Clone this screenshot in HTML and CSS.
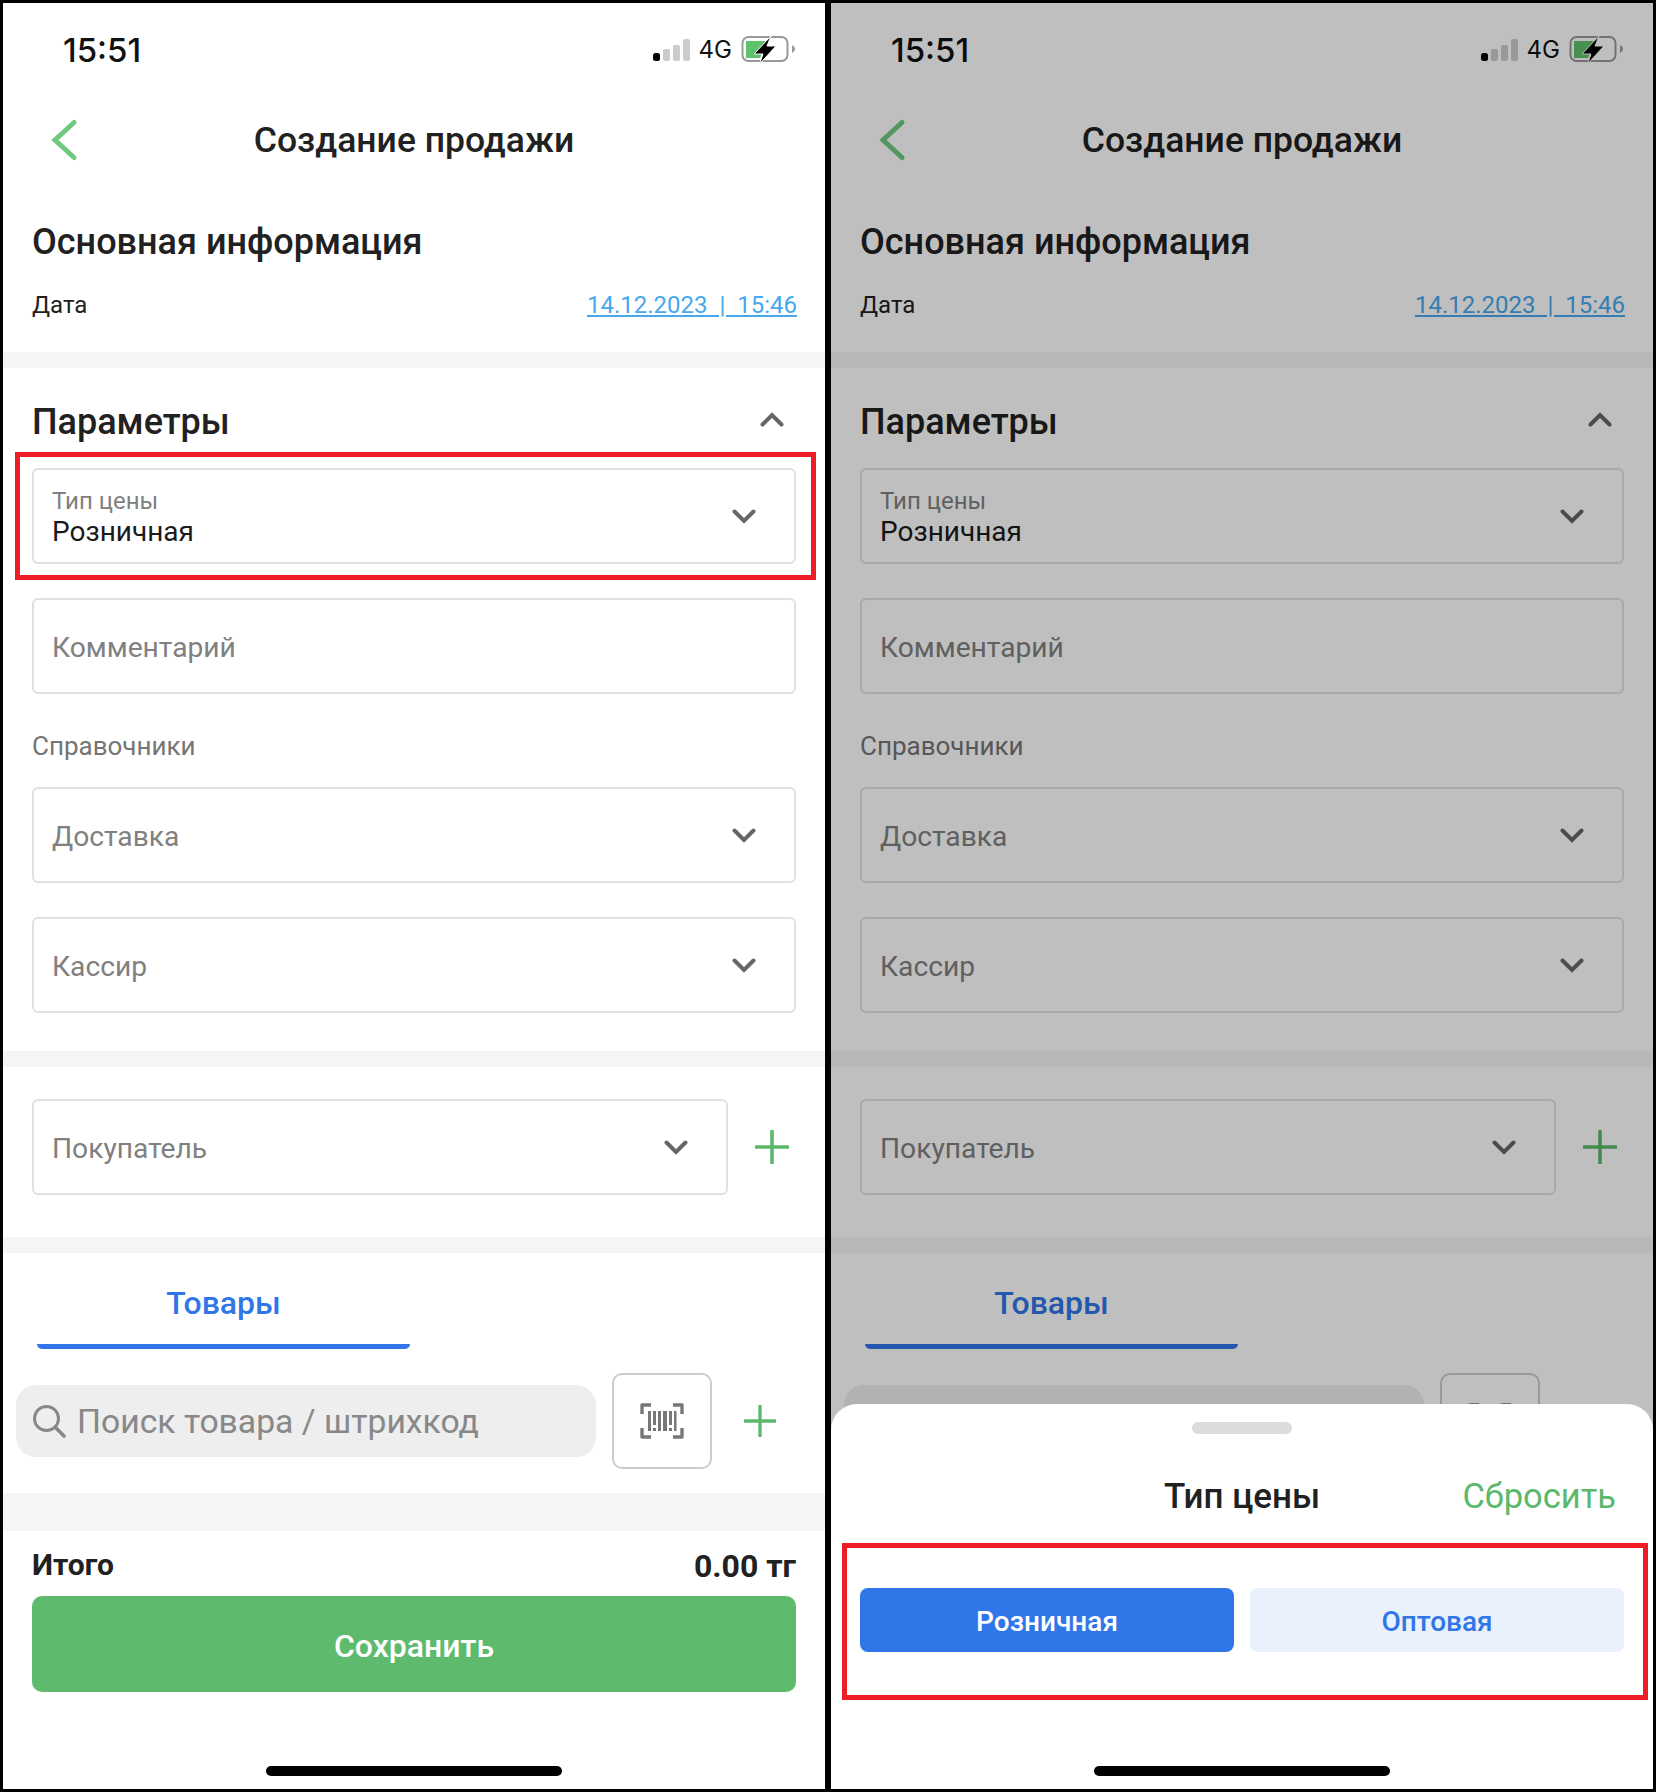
FILE: index.html
```html
<!DOCTYPE html>
<html>
<head>
	<meta charset="utf-8" />
	<title>Создание продажи</title>
	<link rel="stylesheet" href="styles.css">
</head>
<body>
<svg class="defs" width="0" height="0">
	<symbol id="i-signal" viewBox="0 0 37 22">
		<rect x="0" y="14" width="7" height="8" rx="2.5" fill="#000"/>
		<rect x="10" y="10" width="7" height="12" rx="2" fill="#ccc"/>
		<rect x="20" y="6" width="7" height="16" rx="2" fill="#ccc"/>
		<rect x="30" y="0" width="7" height="22" rx="2" fill="#ccc"/>
	</symbol>
	<symbol id="i-battery" viewBox="0 0 54 30">
		<rect x="1.5" y="3" width="45" height="24" rx="6" fill="none" stroke="#999" stroke-width="2"/>
		<path d="M5 7h22l-8 17H5z" fill="#5ec26a"/>
		<path d="M51 11c2 1 3 3 3 4s-1 3-3 4z" fill="#999"/>
		<path d="M30 2 13 20h9l-3.500 10L35 12h-9z" fill="#000" stroke="#fff" stroke-width="1"/>
	</symbol>
	<symbol id="i-back" viewBox="0 0 28 44">
		<path d="M23 4.500 4 22l19 17.500" fill="none" stroke="#6fc97f" stroke-width="5" stroke-linecap="round"/>
	</symbol>
	<symbol id="i-down" viewBox="0 0 24 15">
		<path d="M2.500 2.500 12 12 21.500 2.500" fill="none" stroke="#666" stroke-width="4" stroke-linecap="round"/>
	</symbol>
	<symbol id="i-up" viewBox="0 0 24 15">
		<path d="M2.500 12.500 12 3 21.500 12.500" fill="none" stroke="#666" stroke-width="4" stroke-linecap="round"/>
	</symbol>
	<symbol id="i-plus" viewBox="0 0 34 34">
		<path d="M17 1v32M1 17h32" fill="none" stroke="#5cb86a" stroke-width="3.600" stroke-linecap="round"/>
	</symbol>
	<symbol id="i-search" viewBox="0 0 34 34">
		<circle cx="14.500" cy="14.500" r="12" fill="none" stroke="#888" stroke-width="3"/>
		<path d="M23.500 23.500 32 32" stroke="#888" stroke-width="3.600" stroke-linecap="round"/>
	</symbol>
	<symbol id="i-barcode" viewBox="0 0 44 36">
		<g fill="none" stroke="#777" stroke-width="3.400" stroke-linejoin="round">
			<path d="M11 2H2v9M33 2h9v9M11 34H2v-9M33 34h9v-9"/>
		</g>
		<g fill="#777">
			<rect x="8" y="8" width="3" height="20"/>
			<rect x="13" y="8" width="3" height="14"/>
			<rect x="13" y="25" width="3" height="3"/>
			<rect x="18" y="8" width="3" height="20"/>
			<rect x="23" y="8" width="4" height="20"/>
			<rect x="29" y="8" width="3" height="14"/>
			<rect x="29" y="25" width="3" height="3"/>
			<rect x="34" y="8" width="2.500" height="20"/>
		</g>
	</symbol>
</svg>

<div class="frame">

	<!-- экран формы -->
	<div class="phone">
		<div class="status">
			<span class="time">15:51</span>
			<svg class="signal"><use href="#i-signal"/></svg>
			<span class="net">4G</span>
			<svg class="battery"><use href="#i-battery"/></svg>
		</div>
		<div class="header">
			<svg class="back"><use href="#i-back"/></svg>
			<div class="header-title">Создание продажи</div>
		</div>
		<div class="info">
			<div class="section-title">Основная информация</div>
			<div class="date-row">
				<span>Дата</span>
				<a class="date-link" href="#">14.12.2023&nbsp; |&nbsp; 15:46</a>
			</div>
		</div>
		<div class="band"></div>
		<div class="params">
			<div class="params-head">
				<div class="section-title">Параметры</div>
				<svg class="up"><use href="#i-up"/></svg>
			</div>
			<div class="field marked">
				<div class="field-text">
					<div class="field-label">Тип цены</div>
					<div class="field-value">Розничная</div>
				</div>
				<svg class="down"><use href="#i-down"/></svg>
			</div>
			<div class="field"><div class="placeholder">Комментарий</div></div>
			<div class="group-label">Справочники</div>
			<div class="field">
				<div class="placeholder">Доставка</div>
				<svg class="down"><use href="#i-down"/></svg>
			</div>
			<div class="field">
				<div class="placeholder">Кассир</div>
				<svg class="down"><use href="#i-down"/></svg>
			</div>
		</div>
		<div class="band"></div>
		<div class="buyer">
			<div class="field buyer-field">
				<div class="placeholder">Покупатель</div>
				<svg class="down"><use href="#i-down"/></svg>
			</div>
			<svg class="plus"><use href="#i-plus"/></svg>
		</div>
		<div class="band"></div>
		<div class="tabs"><div class="tab">Товары</div></div>
		<div class="search-row">
			<div class="search">
				<svg class="search-icon"><use href="#i-search"/></svg>
				<span>Поиск товара / штрихкод</span>
			</div>
			<div class="scan"><svg class="barcode"><use href="#i-barcode"/></svg></div>
			<svg class="plus plus-search"><use href="#i-plus"/></svg>
		</div>
		<div class="band band-wide"></div>
		<div class="total">
			<span>Итого</span>
			<span class="sum">0.00 тг</span>
		</div>
		<div class="save">Сохранить</div>
		<div class="home"></div>
	</div>

	<!-- тот же экран + шторка -->
	<div class="phone">
		<div class="status">
			<span class="time">15:51</span>
			<svg class="signal"><use href="#i-signal"/></svg>
			<span class="net">4G</span>
			<svg class="battery"><use href="#i-battery"/></svg>
		</div>
		<div class="header">
			<svg class="back"><use href="#i-back"/></svg>
			<div class="header-title">Создание продажи</div>
		</div>
		<div class="info">
			<div class="section-title">Основная информация</div>
			<div class="date-row">
				<span>Дата</span>
				<a class="date-link" href="#">14.12.2023&nbsp; |&nbsp; 15:46</a>
			</div>
		</div>
		<div class="band"></div>
		<div class="params">
			<div class="params-head">
				<div class="section-title">Параметры</div>
				<svg class="up"><use href="#i-up"/></svg>
			</div>
			<div class="field">
				<div class="field-text">
					<div class="field-label">Тип цены</div>
					<div class="field-value">Розничная</div>
				</div>
				<svg class="down"><use href="#i-down"/></svg>
			</div>
			<div class="field"><div class="placeholder">Комментарий</div></div>
			<div class="group-label">Справочники</div>
			<div class="field">
				<div class="placeholder">Доставка</div>
				<svg class="down"><use href="#i-down"/></svg>
			</div>
			<div class="field">
				<div class="placeholder">Кассир</div>
				<svg class="down"><use href="#i-down"/></svg>
			</div>
		</div>
		<div class="band"></div>
		<div class="buyer">
			<div class="field buyer-field">
				<div class="placeholder">Покупатель</div>
				<svg class="down"><use href="#i-down"/></svg>
			</div>
			<svg class="plus"><use href="#i-plus"/></svg>
		</div>
		<div class="band"></div>
		<div class="tabs"><div class="tab">Товары</div></div>
		<div class="search-row">
			<div class="search">
				<svg class="search-icon"><use href="#i-search"/></svg>
				<span>Поиск товара / штрихкод</span>
			</div>
			<div class="scan"><svg class="barcode"><use href="#i-barcode"/></svg></div>
			<svg class="plus plus-search"><use href="#i-plus"/></svg>
		</div>

		<div class="overlay"></div>
		<div class="sheet">
			<div class="handle"></div>
			<div class="sheet-head">
				<div class="sheet-title">Тип цены</div>
				<div class="sheet-reset">Сбросить</div>
			</div>
			<div class="options">
				<div class="option option-on">Розничная</div>
				<div class="option">Оптовая</div>
			</div>
			<div class="home sheet-home"></div>
		</div>
	</div>

</div>
</body>
</html>
```

FILE: styles.css
```css
body{
	margin: 0;
	background-color: #000;
	font-family: Roboto, "Liberation Sans", sans-serif;
	color: #212121;
}
.defs{
	position: absolute;
}
.frame{
	display: flex;
	gap: 6px;
	padding: 3px;
	width: 1650px;
}
.phone{
	position: relative;
	width: 822px;
	height: 1786px;
	background-color: #fff;
	overflow: hidden;
	flex: none;
}
/* status bar */
.status{
	display: flex;
	align-items: center;
	height: 92px;
	padding: 0 30px 0 60px;
}
.time{
	font-family: Inter, Roboto, sans-serif;
	font-size: 33px;
	font-weight: 500;
	color: #111;
	margin-right: auto;
	padding-top: 2px;
}
.signal{
	width: 37px;
	height: 22px;
	margin-top: 1px;
}
.net{
	font-family: Inter, Roboto, sans-serif;
	font-size: 24px;
	color: #111;
	margin: 0 9px 0 9px;
}
.battery{
	width: 54px;
	height: 30px;
}
/* header */
.header{
	display: grid;
	grid-template-columns: 1fr auto 1fr;
	align-items: center;
	height: 90px;
}
.back{
	grid-column: 1;
	grid-row: 1;
	width: 28px;
	height: 44px;
	margin-left: 48px;
}
.header-title{
	grid-column: 2;
	grid-row: 1;
	font-size: 35.5px;
	font-weight: 500;
}
/* sections */
.section-title{
	font-size: 36px;
	font-weight: 500;
	line-height: 50px;
}
.info{
	padding: 32px 29px 0 29px;
	height: 135px;
}
.date-row{
	display: flex;
	justify-content: space-between;
	align-items: center;
	height: 40px;
	margin: 18px -1px 0 0;
	font-size: 24px;
}
.date-link{
	color: #47a8ee;
}
.band{
	height: 16px;
	background-color: #f5f5f5;
}
.band-wide{
	height: 38px;
}
.params{
	padding: 28px 29px 38px 29px;
}
.params-head{
	display: flex;
	justify-content: space-between;
	align-items: center;
	height: 50px;
	margin-bottom: 22px;
	padding-top: 1px;
	box-sizing: border-box;
}
.up{
	width: 24px;
	height: 15px;
	margin: -4px 12px 0 0;
}
.field{
	position: relative;
	display: flex;
	justify-content: space-between;
	align-items: center;
	box-sizing: border-box;
	height: 96px;
	margin-bottom: 34px;
	padding: 1px 38px 0 18px;
	border: 2px solid #e0e0e0;
	border-radius: 6px;
}
.params .field:last-child{
	margin-bottom: 0;
}
.marked::after{
	content: "";
	position: absolute;
	top: -18px;
	right: -22px;
	bottom: -18px;
	left: -19px;
	border: 5px solid #ee1c25;
}
.field-label{
	font-size: 24px;
	line-height: 30px;
	color: #808080;
}
.field-value{
	font-size: 28px;
	line-height: 32px;
	color: #1a1a1a;
}
.placeholder{
	font-size: 28.2px;
	color: #808080;
	padding-top: 2px;
}
.down{
	width: 24px;
	height: 15px;
}
.group-label{
	font-size: 26px;
	line-height: 30px;
	color: #757575;
	margin: 37px 0 26px 0;
}
.buyer{
	display: flex;
	align-items: center;
	padding: 32px 32px 42px 29px;
}
.buyer-field{
	width: 696px;
	margin-bottom: 0;
}
.plus{
	width: 34px;
	height: 34px;
	margin-left: 27px;
}
/* tabs */
.tabs{
	height: 96px;
	padding-left: 34px;
}
.tab{
	position: relative;
	box-sizing: border-box;
	width: 373px;
	height: 96px;
	padding-top: 32px;
	color: #3176e8;
	font-size: 32px;
	font-weight: 500;
	line-height: 36px;
	text-align: center;
}
.tab::after{
	content: "";
	position: absolute;
	right: 0;
	bottom: 0;
	left: 0;
	height: 5px;
	background-color: #3176e8;
	border-radius: 0 0 6px 6px;
}
/* search */
.search-row{
	display: flex;
	align-items: center;
	padding: 24px 0 24px 13px;
}
.search{
	display: flex;
	align-items: center;
	width: 580px;
	height: 72px;
	box-sizing: border-box;
	padding-left: 16px;
	background-color: #eee;
	border-radius: 20px;
	color: #888;
	font-size: 33.7px;
}
.search-icon{
	width: 34px;
	height: 34px;
	margin-right: 11px;
}
.scan{
	display: flex;
	align-items: center;
	justify-content: center;
	box-sizing: border-box;
	width: 100px;
	height: 96px;
	margin-left: 16px;
	border: 2px solid #ccc;
	border-radius: 10px;
}
.barcode{
	width: 44px;
	height: 36px;
}
.plus-search{
	width: 32px;
	height: 32px;
	margin-left: 32px;
}
/* total */
.total{
	display: flex;
	justify-content: space-between;
	align-items: center;
	height: 42px;
	padding: 12px 29px 1px 29px;
	font-size: 30px;
	font-weight: 700;
}
.sum{
	font-size: 32px;
	padding-top: 4px;
}
.save{
	height: 96px;
	margin: 10px 29px 0 29px;
	background-color: #5ebb6e;
	border-radius: 10px;
	color: #fff;
	font-size: 32px;
	font-weight: 500;
	line-height: 100px;
	text-align: center;
}
.home{
	width: 296px;
	height: 10px;
	margin: 74px auto 0 auto;
	background-color: #000;
	border-radius: 5px;
}
/* overlay + bottom sheet */
.overlay{
	position: absolute;
	top: 0;
	right: 0;
	bottom: 0;
	left: 0;
	background-color: rgba(0, 0, 0, 0.25);
}
.sheet{
	position: absolute;
	right: 0;
	bottom: 0;
	left: 0;
	height: 385px;
	background-color: #fff;
	border-radius: 26px 26px 0 0;
}
.handle{
	width: 100px;
	height: 12px;
	margin: 18px auto 0 auto;
	background-color: #dcdcdc;
	border-radius: 6px;
}
.sheet-head{
	position: relative;
	height: 40px;
	margin-top: 43px;
	line-height: 40px;
	text-align: center;
}
.sheet-title{
	font-size: 35px;
	font-weight: 500;
}
.sheet-reset{
	position: absolute;
	top: -1px;
	right: 37px;
	color: #5cb86a;
	font-size: 34.5px;
}
.options{
	display: flex;
	gap: 16px;
	height: 64px;
	margin: 26px 5px 0 11px;
	padding: 40px 19px 43px 13px;
	border: 5px solid #ee1c25;
}
.option{
	flex: 1;
	background-color: #e8f1fc;
	border-radius: 8px;
	color: #3176e8;
	font-size: 28px;
	font-weight: 500;
	line-height: 68px;
	height: 64px;
	text-align: center;
}
.option-on{
	background-color: #3176e8;
	color: #fff;
}
.sheet-home{
	margin-top: 66px;
}
```
